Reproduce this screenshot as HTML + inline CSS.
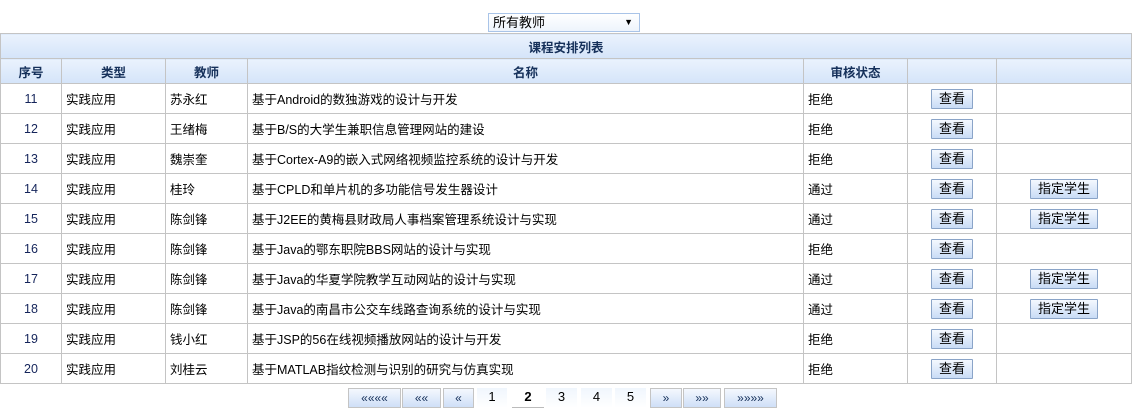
<!DOCTYPE html>
<html><head><meta charset="utf-8"><style>
body{margin:0;width:1132px;height:420px;background:#fff;font-family:"Liberation Sans","Noto Sans CJK SC",sans-serif;font-size:12px;color:#000;position:relative;overflow:hidden}
.sel{position:absolute;left:488px;top:13px;width:152px;height:19px;border:1px solid #a9c4e8;background:linear-gradient(#fff,#eef4fc);box-sizing:border-box;font-size:13px;line-height:17px;padding-left:4px}
.sel span{position:absolute;right:6px;top:0;font-size:9px}
table{position:absolute;left:0;top:33px;border-collapse:collapse;table-layout:fixed;width:1132px}
td,th{border:1px solid #c4c4c4;padding:0;height:29px;font-size:12.5px}
th{background:linear-gradient(#eaf2fd,#d4e4f9);color:#15305a;font-weight:bold;height:24px}
td{padding-left:4px}
td.c{text-align:center;padding:0;color:#14245a}
.b{display:inline-block;border:1px solid #8aa4c8;background:linear-gradient(#f4f8fe,#c9dcf6);height:18px;line-height:18px;padding:0 7px;font-size:13px;border-radius:1px;color:#000}
.pg{position:absolute;top:388px;height:20px;border:1px solid #c4c4c4;box-sizing:border-box;background:linear-gradient(#f4f8fe,#cfdff7);text-align:center;line-height:18px;font-size:12px;color:#15305a}
.pg.n{border:none;background:linear-gradient(#f0f6fd,#fff);font-size:13px;color:#000}
.pg.cur{background:#fff;border:none;border-bottom:1px solid #bbb;font-weight:bold}
</style></head><body>
<div class="sel">所有教师<span>▼</span></div>
<table>
<colgroup><col style="width:61px"><col style="width:104px"><col style="width:82px"><col style="width:556px"><col style="width:104px"><col style="width:89px"><col style="width:135px"></colgroup>
<tr><th colspan="7">课程安排列表</th></tr>
<tr><th>序号</th><th>类型</th><th>教师</th><th>名称</th><th>审核状态</th><th></th><th></th></tr>
<tr><td class="c">11</td><td>实践应用</td><td>苏永红</td><td>基于Android的数独游戏的设计与开发</td><td>拒绝</td><td class="c"><span class="b">查看</span></td><td></td></tr>
<tr><td class="c">12</td><td>实践应用</td><td>王绪梅</td><td>基于B/S的大学生兼职信息管理网站的建设</td><td>拒绝</td><td class="c"><span class="b">查看</span></td><td></td></tr>
<tr><td class="c">13</td><td>实践应用</td><td>魏崇奎</td><td>基于Cortex-A9的嵌入式网络视频监控系统的设计与开发</td><td>拒绝</td><td class="c"><span class="b">查看</span></td><td></td></tr>
<tr><td class="c">14</td><td>实践应用</td><td>桂玲</td><td>基于CPLD和单片机的多功能信号发生器设计</td><td>通过</td><td class="c"><span class="b">查看</span></td><td class="c"><span class="b">指定学生</span></td></tr>
<tr><td class="c">15</td><td>实践应用</td><td>陈剑锋</td><td>基于J2EE的黄梅县财政局人事档案管理系统设计与实现</td><td>通过</td><td class="c"><span class="b">查看</span></td><td class="c"><span class="b">指定学生</span></td></tr>
<tr><td class="c">16</td><td>实践应用</td><td>陈剑锋</td><td>基于Java的鄂东职院BBS网站的设计与实现</td><td>拒绝</td><td class="c"><span class="b">查看</span></td><td></td></tr>
<tr><td class="c">17</td><td>实践应用</td><td>陈剑锋</td><td>基于Java的华夏学院教学互动网站的设计与实现</td><td>通过</td><td class="c"><span class="b">查看</span></td><td class="c"><span class="b">指定学生</span></td></tr>
<tr><td class="c">18</td><td>实践应用</td><td>陈剑锋</td><td>基于Java的南昌市公交车线路查询系统的设计与实现</td><td>通过</td><td class="c"><span class="b">查看</span></td><td class="c"><span class="b">指定学生</span></td></tr>
<tr><td class="c">19</td><td>实践应用</td><td>钱小红</td><td>基于JSP的56在线视频播放网站的设计与开发</td><td>拒绝</td><td class="c"><span class="b">查看</span></td><td></td></tr>
<tr><td class="c">20</td><td>实践应用</td><td>刘桂云</td><td>基于MATLAB指纹检测与识别的研究与仿真实现</td><td>拒绝</td><td class="c"><span class="b">查看</span></td><td></td></tr>
</table>
<div class="pg" style="left:348px;width:53px">««««</div>
<div class="pg" style="left:402px;width:39px">««</div>
<div class="pg" style="left:443px;width:31px">«</div>
<div class="pg n" style="left:477px;width:30px">1</div>
<div class="pg n cur" style="left:512px;width:32px">2</div>
<div class="pg n" style="left:546px;width:31px">3</div>
<div class="pg n" style="left:581px;width:31px">4</div>
<div class="pg n" style="left:615px;width:31px">5</div>
<div class="pg" style="left:650px;width:32px">»</div>
<div class="pg" style="left:683px;width:38px">»»</div>
<div class="pg" style="left:724px;width:53px">»»»»</div>
</body></html>
